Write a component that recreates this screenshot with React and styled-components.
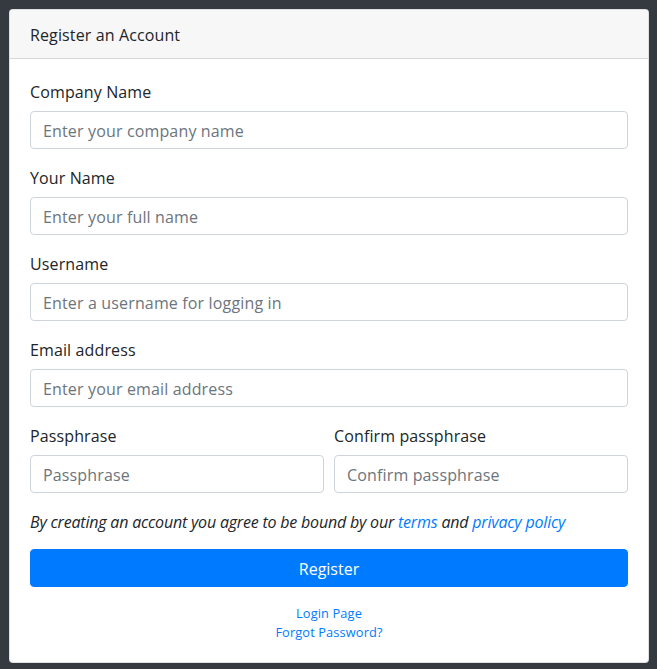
import React from "react";
import styled, { createGlobalStyle } from "styled-components";

const GlobalStyle = createGlobalStyle`
  html, body { margin: 0; padding: 0; }
  body {
    background: #343a40;
    min-height: 100vh;
    font-family: "Open Sans", "Liberation Sans", sans-serif;
    font-size: 16px;
    line-height: 1.5;
    letter-spacing: 0.12px;
    color: #212529;
  }
  * { box-sizing: border-box; }
`;

const Page = styled.div`
  padding: 9px 8px 7px 9px;
`;

const Card = styled.div`
  width: 640px;
  background: #fff;
  border: 1px solid rgba(0, 0, 0, 0.125);
  border-radius: 4px;
  overflow: hidden;
`;

const CardHeader = styled.div`
  background: #f7f7f7;
  border-bottom: 1px solid rgba(0, 0, 0, 0.125);
  padding: 13px 20px 11px;
  line-height: 24px;
`;

const CardBody = styled.form`
  padding: 20px;
`;

const Group = styled.div`
  margin-bottom: 16px;
`;

const Row = styled.div`
  display: grid;
  grid-template-columns: 1fr 1fr;
  column-gap: 10px;
`;

const Label = styled.label`
  display: block;
  padding-top: 1px;
  margin-bottom: 7px;
  line-height: 24px;
`;

const Input = styled.input`
  display: block;
  width: 100%;
  height: 38px;
  padding: 7px 12px 5px;
  font: inherit;
  font-size: 16px;
  line-height: 24px;
  letter-spacing: 0.15px;
  color: #495057;
  background: #fff;
  border: 1px solid #ced4da;
  border-radius: 4px;
  outline: none;
  &::placeholder { color: #6c757d; opacity: 1; }
`;

const Notice = styled.p`
  margin: 0 0 15px;
  padding-top: 1px;
  font-style: italic;
  line-height: 24px;
  letter-spacing: -0.2px;
`;

const Link = styled.a`
  color: #007bff;
  text-decoration: none;
`;

const Button = styled.button`
  display: block;
  width: 100%;
  height: 38px;
  padding: 1px 12px 0;
  background: #007bff;
  color: #fff;
  border: 1px solid #007bff;
  border-radius: 4px;
  font: inherit;
  font-size: 16px;
  line-height: 24px;
  cursor: pointer;
`;

const Links = styled.div`
  margin-top: 16px;
  padding-top: 1px;
  text-align: center;
  font-size: 12.8px;
  line-height: 19.2px;
  display: flex;
  flex-direction: column;
  align-items: center;
`;

const Field = ({ label, placeholder, type = "text" }) => (
  <Group>
    <Label>{label}</Label>
    <Input type={type} placeholder={placeholder} />
  </Group>
);

export default function App() {
  return (
    <>
      <GlobalStyle />
      <Page>
        <Card>
          <CardHeader>Register an Account</CardHeader>
          <CardBody onSubmit={(e) => e.preventDefault()}>
            <Field label="Company Name" placeholder="Enter your company name" />
            <Field label="Your Name" placeholder="Enter your full name" />
            <Field label="Username" placeholder="Enter a username for logging in" />
            <Field label="Email address" placeholder="Enter your email address" type="email" />
            <Row>
              <Field label="Passphrase" placeholder="Passphrase" type="password" />
              <Field label="Confirm passphrase" placeholder="Confirm passphrase" type="password" />
            </Row>
            <Notice>
              By creating an account you agree to be bound by our <Link href="#">terms</Link> and{" "}
              <Link href="#">privacy policy</Link>
            </Notice>
            <Button type="submit">Register</Button>
            <Links>
              <Link href="#">Login Page</Link>
              <Link href="#">Forgot Password?</Link>
            </Links>
          </CardBody>
        </Card>
      </Page>
    </>
  );
}
